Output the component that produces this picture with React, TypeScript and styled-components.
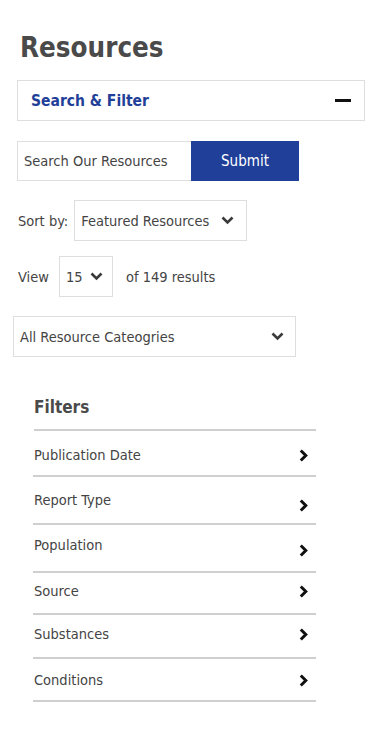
import styled, { createGlobalStyle } from "styled-components";

const GlobalStyle = createGlobalStyle`
  body {
    margin: 0;
    background: #ffffff;
    font-family: Tahoma, "DejaVu Sans Condensed", "Open Sans", sans-serif;
    color: #333333;
  }
`;

const Page = styled.div`
  width: 375px;
  padding: 0 10px 40px 17px;
  box-sizing: border-box;
`;

const Title = styled.h1`
  margin: 0;
  padding-top: 30px;
  margin-left: 3px;
  font-size: 27.5px;
  line-height: 34px;
  font-weight: 700;
  color: #4a4a4a;
`;

const Toggle = styled.div`
  margin-top: 16px;
  height: 41px;
  border: 1px solid #dedede;
  box-sizing: border-box;
  display: flex;
  align-items: center;
  justify-content: space-between;
  padding: 0 13px 0 13px;
`;

const ToggleLabel = styled.span`
  font-size: 15.5px;
  font-weight: 700;
  color: #1f3f99;
`;

const Minus = styled.span`
  width: 16px;
  height: 3px;
  background: #111111;
`;

const SearchRow = styled.div`
  margin-top: 20px;
  display: flex;
  height: 40px;
`;

const SearchInput = styled.div`
  width: 174px;
  border: 1px solid #dedede;
  border-right: none;
  box-sizing: border-box;
  display: flex;
  align-items: center;
  padding-left: 6px;
  font-size: 14.5px;
  color: #444444;
`;

const SubmitButton = styled.div`
  width: 108px;
  background: #1f3f99;
  color: #ffffff;
  font-size: 15px;
  display: flex;
  align-items: center;
  justify-content: center;
`;

const InlineRow = styled.div<{ $top: number }>`
  margin-top: ${(p) => p.$top}px;
  display: flex;
  align-items: center;
  font-size: 14.5px;
  color: #444444;
`;

const Label = styled.span<{ $gap: number }>`
  margin-left: 1px;
  margin-right: ${(p) => p.$gap}px;
`;

const Select = styled.div<{ $width: number; $pad: number }>`
  width: ${(p) => p.$width}px;
  height: 41px;
  box-sizing: border-box;
  border: 1px solid #dedede;
  display: flex;
  align-items: center;
  justify-content: space-between;
  padding: 0 ${(p) => p.$pad}px 0 6px;
  font-size: 14.5px;
  color: #444444;
`;

const WideSelect = styled(Select)`
  margin-top: 19px;
  margin-left: -4px;
`;

const Results = styled.span`
  margin-left: 13px;
`;

const Filters = styled.section`
  margin: 39px 0 0 16px;
  width: 283px;
`;

const FiltersTitle = styled.h2`
  margin: 0 0 0 1px;
  font-size: 17px;
  line-height: 22px;
  font-weight: 700;
  color: #4a4a4a;
  padding-bottom: 11px;
  border-bottom: 2px solid #cfcfcf;
`;

const FilterRow = styled.div<{ $height: number; $textTop: number }>`
  height: ${(p) => p.$height}px;
  box-sizing: border-box;
  border-bottom: 2px solid #cfcfcf;
  display: flex;
  justify-content: space-between;
  align-items: flex-start;
  padding: ${(p) => p.$textTop}px 8px 0 1px;
  font-size: 14.5px;
  line-height: 18px;
  color: #444444;
`;

const Chevron = styled.svg<{ $shift: number }>`
  margin-top: ${(p) => p.$shift}px;
  flex-shrink: 0;
`;

function Down() {
  return (
    <svg width="13" height="9" viewBox="0 0 13 9">
      <path d="M1.5 1.5 L6.5 6.5 L11.5 1.5" fill="none" stroke="#3a3a3a" strokeWidth="2.6" />
    </svg>
  );
}

const filters = [
  { name: "Publication Date", height: 46, top: 15, shift: 3 },
  { name: "Report Type", height: 48, top: 14, shift: 8 },
  { name: "Population", height: 48, top: 11, shift: 8 },
  { name: "Source", height: 42, top: 9, shift: 3 },
  { name: "Substances", height: 44, top: 10, shift: 3 },
  { name: "Conditions", height: 43, top: 12, shift: 3 },
];

export default function App() {
  return (
    <>
      <GlobalStyle />
      <Page>
        <Title>Resources</Title>
        <Toggle>
          <ToggleLabel>Search &amp; Filter</ToggleLabel>
          <Minus />
        </Toggle>
        <SearchRow>
          <SearchInput>Search Our Resources</SearchInput>
          <SubmitButton>Submit</SubmitButton>
        </SearchRow>
        <InlineRow $top={19}>
          <Label $gap={6}>Sort by:</Label>
          <Select $width={173} $pad={12}>
            Featured Resources
            <Down />
          </Select>
        </InlineRow>
        <InlineRow $top={15}>
          <Label $gap={10}>View</Label>
          <Select $width={54} $pad={9}>
            15
            <Down />
          </Select>
          <Results>of 149 results</Results>
        </InlineRow>
        <WideSelect $width={283} $pad={11}>
          All Resource Cateogries
          <Down />
        </WideSelect>
        <Filters>
          <FiltersTitle>Filters</FiltersTitle>
          {filters.map((f) => (
            <FilterRow key={f.name} $height={f.height} $textTop={f.top}>
              {f.name}
              <Chevron $shift={f.shift} width="9" height="13" viewBox="0 0 9 13">
                <path d="M1.8 1.5 L6.8 6.5 L1.8 11.5" fill="none" stroke="#111" strokeWidth="3" />
              </Chevron>
            </FilterRow>
          ))}
        </Filters>
      </Page>
    </>
  );
}
